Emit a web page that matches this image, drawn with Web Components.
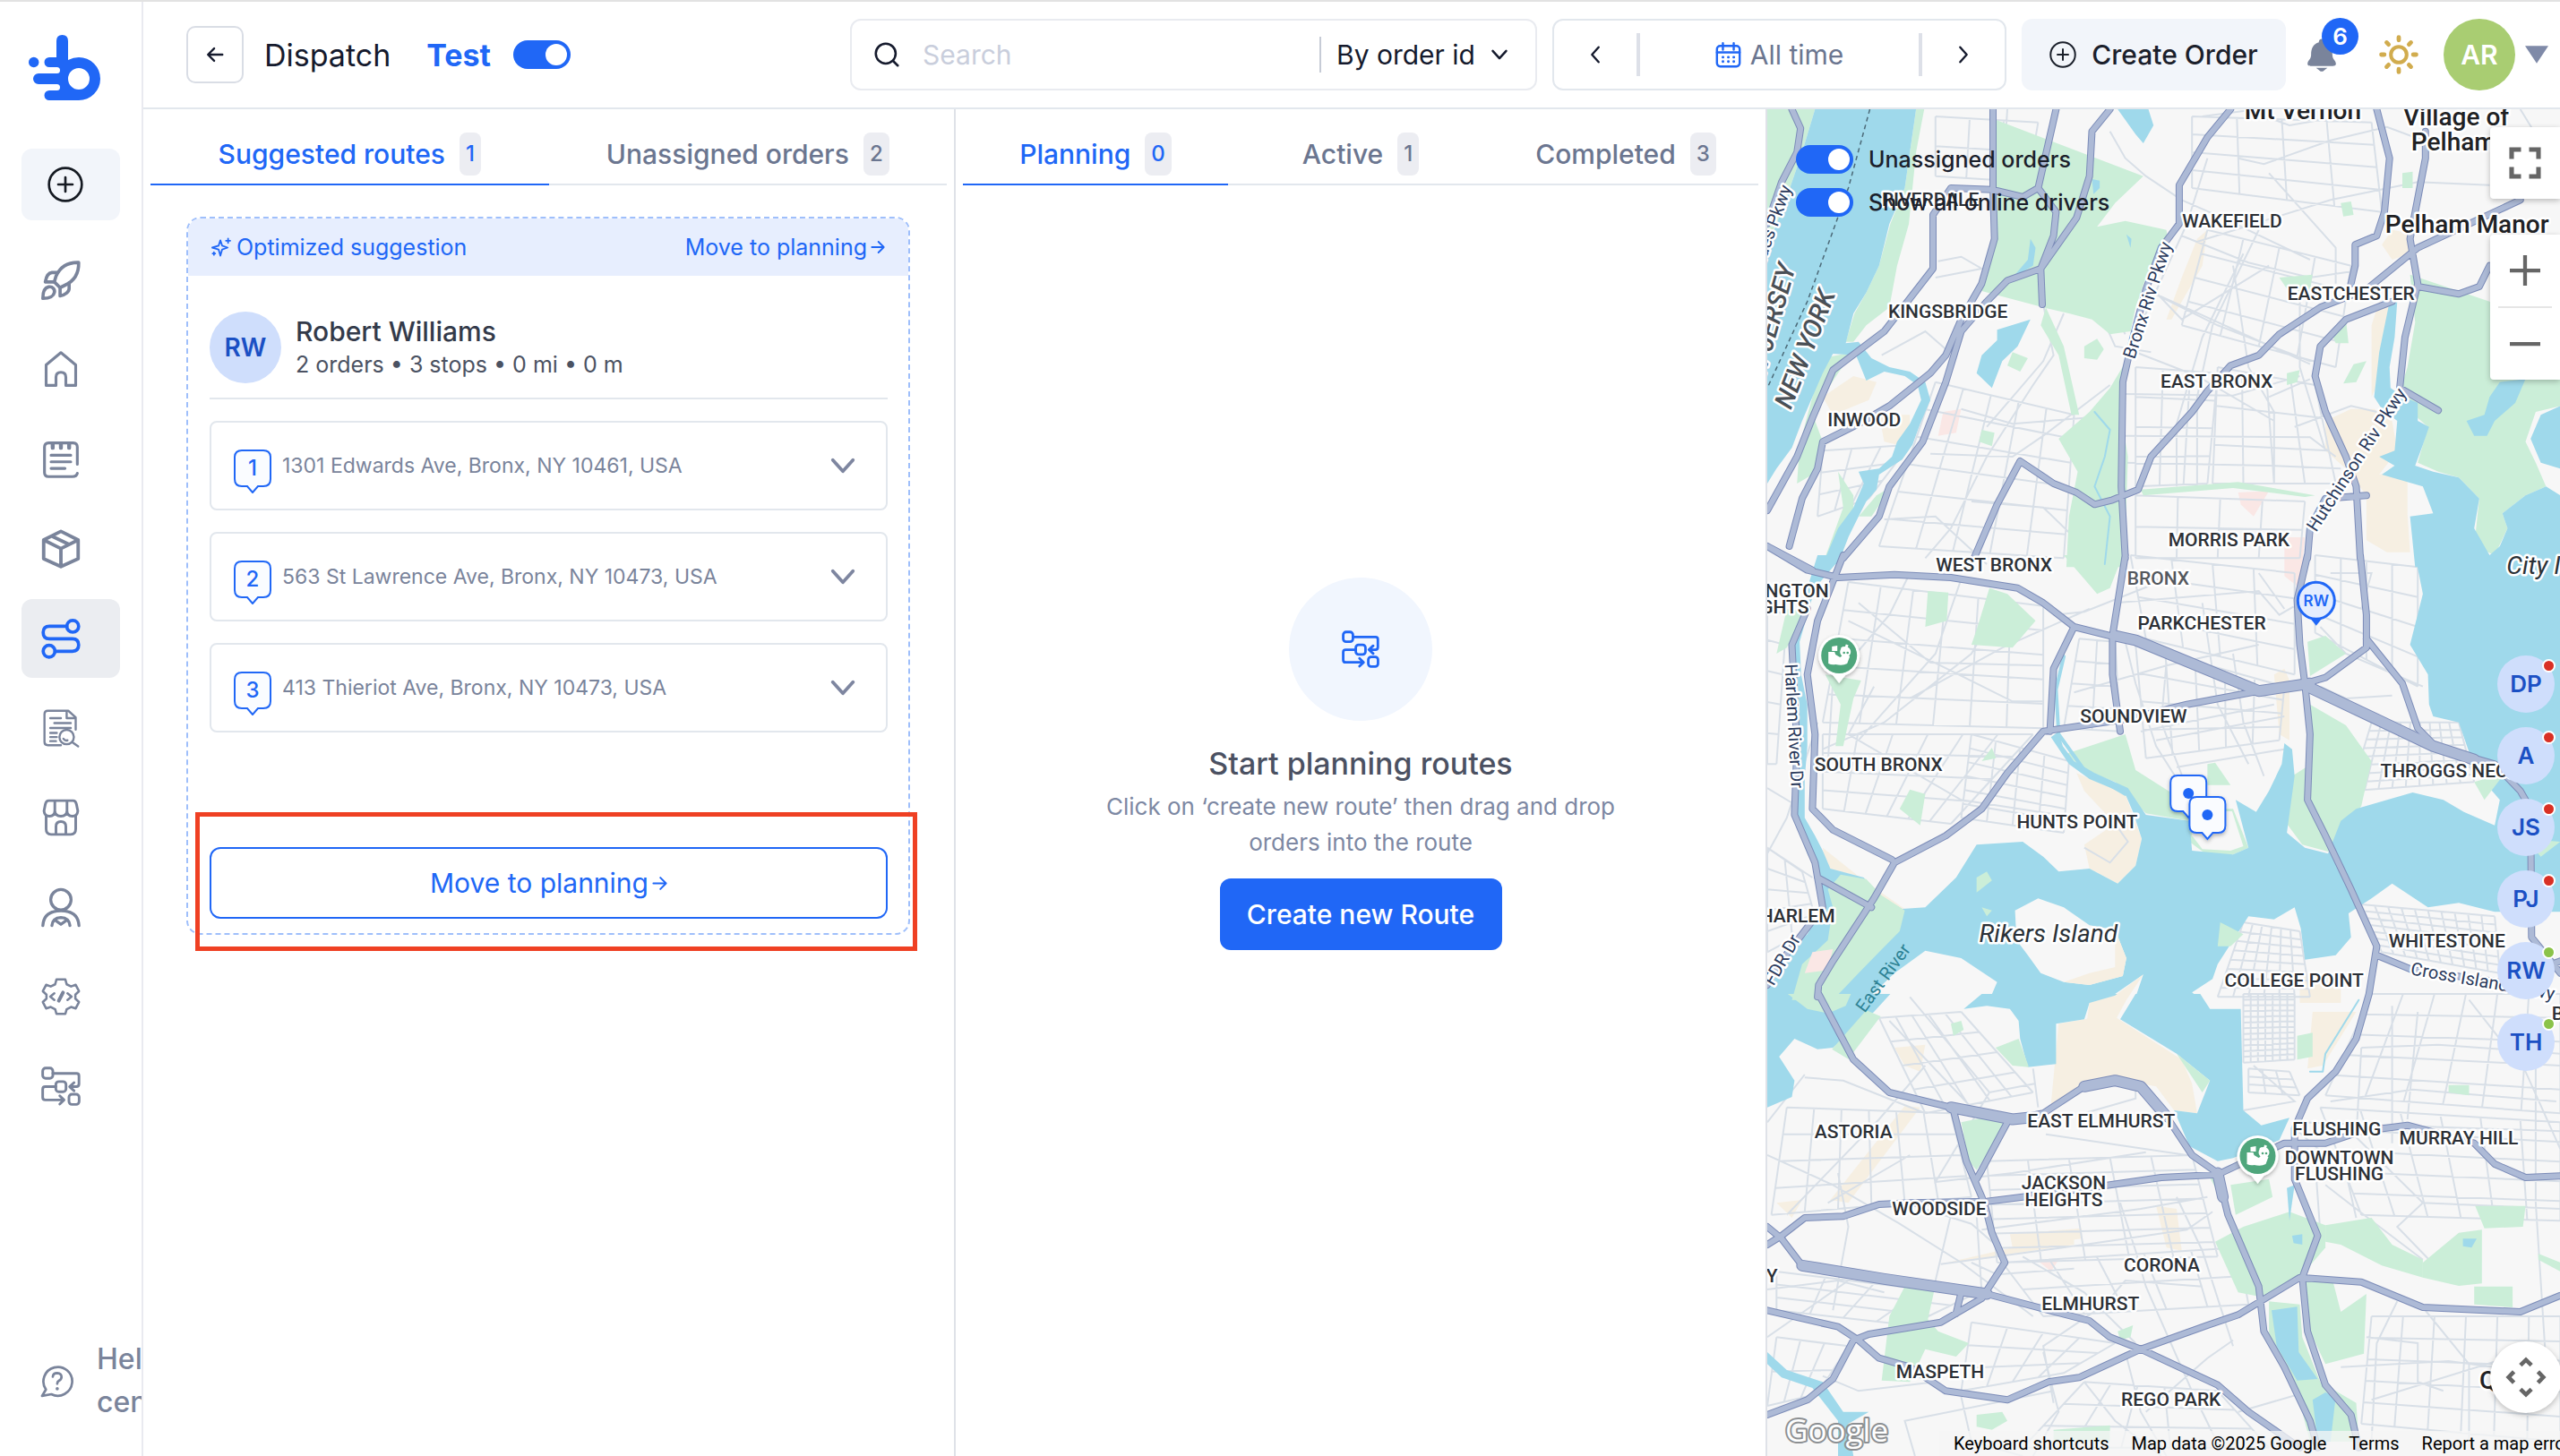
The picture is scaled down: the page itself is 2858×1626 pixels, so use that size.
<!DOCTYPE html>
<html lang="en">
<head>
<meta charset="utf-8">
<title>Dispatch</title>
<style>
html,body{margin:0;height:100%}
body{font-family:Inter,"Open Sans",sans-serif;color:#151a2d;background:#fff;overflow:hidden;
--blue:#2067f6;--line:#e2e7ed;--slate:#6b7690;--mute:#7a849b;--soft:#f2f5fa;--chip:#ecedf2}
</style>
</head>
<body>
<dispatch-app></dispatch-app>
<script>
const define=(name,css,html,init)=>{
  const t=document.createElement('template');
  t.innerHTML=`<style>*{box-sizing:border-box}button,input,select{font:inherit;color:inherit;margin:0}button{border:0;padding:0;background:none;cursor:pointer}h1,h2,p,ul,ol{margin:0;padding:0;font:inherit;list-style:none}a{color:inherit;text-decoration:none}${css}</style>${html}`;
  customElements.define(name,class extends HTMLElement{
    connectedCallback(){
      if(this.shadowRoot)return;
      const r=this.attachShadow({mode:'open'});
      r.append(t.content.cloneNode(true));
      if(init)init(this,r);
    }
  });
};

/* ---------- icons ---------- */
const planner='<rect x=".9" y="1" width="6.2" height="6.2" rx="1.8"/><path d="M7.1 4.2H21.5Q23 4.2 23 5.7V10.7Q23 12.3 21.4 12.3H17.6M20 9.8L17.3 12.3L20 14.8"/><rect x="8.9" y="9.2" width="6.2" height="6.2" rx="1.8"/><path d="M8.9 12.3H2.5Q.9 12.3 .9 13.9V18.8Q.9 20.4 2.5 20.4H13.8M11.3 17.9L13.9 20.4L11.3 22.9"/><rect x="16.9" y="16.9" width="6.2" height="6.2" rx="1.8"/>';
const ICONS={
 back:['24','<path d="M21 12H4M11 4.500L3.500 12L11 19.500"/>',2.6],
 arrow:['24','<path d="M2 12H22M13 3L22 12L13 21"/>',2.8],
 plus:['24','<circle cx="12" cy="12" r="11"/><path d="M12 7.200V16.800M7.200 12H16.800"/>',1.6],
 rocket:['24','<path d="M22.800 1.200C16 1 11.500 4 9 9.500L8 13L11.500 16.500L14.500 15C20.500 12.200 23 8 22.800 1.200Z"/><path d="M10 7.300H6.500C4.500 7.500 3 10 2.500 13H8M11.500 16.500V21.500C14.500 21 17 19 17 17V13.600"/><path d="M1 23C1 19 2 16.500 4.500 16C7 15.600 8.500 17.500 8 19.500C7.500 22 5 23 1 23Z"/>',2],
 home:['24','<path d="M3 21.500V9L12 1.500L21 9V21.500H15V16.500Q15 13.500 12 13.500Q9 13.500 9 16.500V21.500Z"/>',1.7],
 notes:['24','<path d="M22 15V4.500Q22 2 19.500 2H4.500Q2 2 2 4.500V20Q2 22.500 4.500 22.500H19Q21.500 22.500 22 20.500"/><path d="M7 2.500V5M12 2.500V5M17 2.500V5" stroke-width="2.400"/><path d="M6 9.500H18M6 13.500H18M6 17.500H14.500"/>',1.7],
 box:['24','<path d="M12 1.300L22.500 6.500V18L12 22.800L1.500 18V6.500ZM1.500 6.500L12 11.800L22.500 6.500M12 11.800V22.800M6.500 4.200L17 9.300"/>',2.1],
 route:['24','<circle cx="19.200" cy="4.600" r="3.600"/><circle cx="4.800" cy="19.800" r="3.600"/><path d="M15.600 4.600H5Q1.200 4.600 1.200 8.300Q1.200 12.200 5 12.200H19Q22.800 12.200 22.800 16Q22.800 19.800 19 19.800H8.400"/>',2],
 docsearch:['24','<path d="M21 13V5.500L16.500 1.500H4Q2 1.500 2 3.500V20.500Q2 22.500 4 22.500H12M15.500 1.500V6H21M5.500 6H12M8 9H18M5.500 12H18M5.500 15H9.500M5.500 17.500H9.500M5.500 20H9"/><circle cx="15.500" cy="17.500" r="4.400"/><path d="M13.500 18.500Q14.500 20 16 19.500M18.800 20.600L22.500 23.200"/>',1.3],
 store:['24','<path d="M3 11V19Q3 22.300 6 22.300H18Q21 22.300 21 19V11"/><path d="M4.500 1.700H19.500Q21 1.700 21.500 4L22.300 8Q22 11.200 19 11.200Q15.800 11.200 15.700 8V1.700M8.300 1.700V8Q8.200 11.200 5 11.200Q2 11.200 1.700 8L2.500 4Q3 1.700 4.500 1.700M8.300 8Q8.500 11.200 12 11.200Q15.500 11.200 15.700 8M9 22V17.500Q9 14.500 12 14.500Q15 14.500 15 17.500V22"/>',1.6],
 person:['24','<circle cx="12" cy="7.500" r="6.200"/><path d="M1 23.300Q1.500 14.300 12 14.200Q22.500 14.300 23 23.300M6.500 23.300Q7 18.500 12 18.300Q17 18.500 17.500 23.300M8.500 20L12 22.500L15.500 20"/>',1.8],
 gear:['24','<path d="M9.300 1.500H14.700L15.500 4.500L18.200 5.800L21 4.800L23 8.700L20.800 10.800V13.200L23 15.300L21 19.200L18.200 18.300L15.500 19.700L14.700 22.500H9.300L8.500 19.700L5.800 18.300L3 19.200L1 15.300L3.200 13.200V10.800L1 8.700L3 4.800L5.800 5.800L8.500 4.500Z"/><path d="M8 10L5.500 12L8 14M16 10L18.500 12L16 14"/><path d="M13.300 9.500L10.700 14.500" stroke-width="2.200"/>',1.4],
 planner:['24',planner,1.6],
 help:['24','<path d="M4.200 18.500A10.700 10.700 0 1 1 8.200 22L1.300 23.300Z"/><path d="M9.300 9Q9.500 6.300 12.600 6.300Q15.800 6.500 15.800 9.300Q15.700 11 13.800 12Q12.600 12.700 12.600 14.200"/><path d="M12.600 17.800V18" stroke-width="2.400"/>',1.8],
 search:['24','<circle cx="11" cy="11" r="9.500"/><path d="M18 18L22.500 22.500"/>',2.2],
 down:['24','<path d="M3 7L12 17L21 7"/>',3],
 left:['24','<path d="M16 3L8 12L16 21"/>',2.600],
 right:['24','<path d="M8 3L16 12L8 21"/>',2.600],
 cal:['24','<rect x="1.500" y="3.500" width="21" height="19" rx="3"/><path d="M7 1V7M17 1V7M1.500 9.500H22.500"/><path d="M7 14H7.100M12 14H12.100M17 14H17.100M7 18H7.100M12 18H12.100M17 18H17.100" stroke-width="2.400"/>',2],
 bell:['24','<path fill="currentColor" stroke="none" d="M12 1C14 1 14 3 14 3.300C18 4.500 19.500 7.500 19.500 12C19.500 15.500 22 16 22 18.500C22 20 20.500 20 20 20H4C3.500 20 2 20 2 18.500C2 16 4.500 15.500 4.500 12C4.500 7.500 6 4.500 10 3.300C10 3 10 1 12 1ZM8 21.300H16L12.800 23.800H11.200Z"/>',1],
 sun:['24','<circle cx="12" cy="12" r="4.800"/><path stroke-width="2.600" d="M12 1.400V3.200M12 20.800V22.600M1.400 12H3.200M20.800 12H22.600M4.600 4.600L5.800 5.800M18.200 18.200L19.400 19.400M4.600 19.400L5.800 18.200M18.200 5.800L19.400 4.600"/>',2.2],
 tri:['24','<path fill="currentColor" stroke="none" d="M0 3H24L12 21Z"/>',0],
 spark:['24','<path d="M11.500 3.500L13.600 9.900L20 12L13.600 14.100L11.500 21.500L9.400 14.100L2 12L9.400 9.900Z"/><path d="M20.500 1.500V6.500M18 4H23M4 17.500V20.500M2.500 19H5.500"/>',1.9],
 full:['24','<path stroke-linecap="butt" stroke-linejoin="miter" d="M2 9V2H9M15 2H22V9M22 15V22H15M9 22H2V15"/>',3.4],
 zin:['24','<path stroke-linecap="butt" d="M12 0V24M0 12H24"/>',3],
 zout:['24','<path stroke-linecap="butt" d="M0 12H24"/>',3],
 cam:['24','<path stroke-linecap="butt" stroke-linejoin="miter" d="M8.800 5L12 1.900L15.200 5M8.800 19L12 22.100L15.200 19M5 8.800L1.900 12L5 15.200M19 8.800L22.100 12L19 15.200"/>',2.4],
 logo:['80 74','<g fill="currentColor" stroke="none"><path fill-rule="evenodd" d="M37.500 0Q44 0 44 7V28Q50 25 56 25A24 24 0 0 1 56 73H23A5.500 5.500 0 0 1 23 62H31.500A3.500 3.500 0 0 0 31.500 55H11A6 6 0 0 1 11 43H31.500A3.500 3.500 0 0 0 31.500 36H23A5.500 5.500 0 0 1 23 25H31V7Q31 0 37.500 0ZM56 37A12 12 0 1 0 56 61A12 12 0 1 0 56 37Z"/><circle cx="5.700" cy="30.500" r="5.700"/></g>',0]
};
define('ui-icon',`:host{display:inline-flex;flex:none;width:var(--s,44px);height:var(--s,44px)}svg{width:100%;height:100%;display:block;overflow:visible}`,'',(el,r)=>{
  const [vb,body,w]=ICONS[el.getAttribute('name')];
  const box=vb.includes(' ')?vb:vb+' '+vb;
  r.innerHTML+=`<svg viewBox="0 0 ${box}" aria-hidden="true" fill="none" stroke="currentColor" stroke-width="${w}" stroke-linecap="round" stroke-linejoin="round">${body}</svg>`;
});

/* ---------- switch ---------- */
define('ui-switch',`:host{display:flex}label{display:flex;align-items:center;gap:17px;cursor:pointer}
:host([before]) label{flex-direction:row-reverse;gap:25px}
input{appearance:none;width:64px;height:32px;border-radius:16px;background:var(--blue);position:relative;flex:none}
input::after{content:"";position:absolute;right:4px;top:4px;width:24px;height:24px;border-radius:50%;background:#fff}`,
`<label><input type="checkbox" role="switch" checked><span><slot></slot></span></label>`);

/* ---------- sidebar ---------- */
define('app-sidebar',`:host{display:flex;flex-direction:column;width:160px;flex:none;border-right:2px solid #e9eaf0;color:var(--mute);overflow:hidden;padding:37px 0 36px}
.logo{--s:80px;color:var(--blue);margin-left:32px;height:74px;display:flex;align-items:center}
.add{display:flex;align-items:center;width:110px;height:80px;margin:53px 0 23px 24px;padding-left:29px;border-radius:12px;background:var(--soft);color:#151a22;--s:40px}
ul{display:flex;flex-direction:column;gap:12px;margin-left:24px}
li a{display:flex;align-items:center;width:110px;height:88px;border-radius:12px;padding-left:22px}
.on{background:#ebedf1;color:var(--blue)}
.help{display:flex;align-items:center;margin-top:auto;padding-left:45px;width:240px;gap:27px;--s:36px;font-size:32px;line-height:48px;font-weight:500}
.help span{width:120px}`,
`<a class="logo" href="#" aria-label="Home"><ui-icon name="logo"></ui-icon></a>
<button class="add" aria-label="Add"><ui-icon name="plus"></ui-icon></button>
<nav><ul>${['rocket','home','notes','box','route','docsearch','store','person','gear','planner'].map(n=>`<li><a href="#" aria-label="${n}"${n=='route'?' class="on"':''}><ui-icon name="${n}"></ui-icon></a></li>`).join('')}</ul></nav>
<a class="help" href="#"><ui-icon name="help"></ui-icon><span>Help center</span></a>`);

/* ---------- header ---------- */
define('app-header',`:host{display:flex;align-items:center;height:120px;flex:none;border-bottom:2px solid var(--line);padding:0 13px 0 48px;gap:17px;font-size:30px}
.back{width:64px;height:64px;border:2px solid #d9dde5;border-radius:10px;display:flex;align-items:center;justify-content:center;--s:22px}
h1{font-size:34px;margin:0 23px 0 6px}
.test{color:var(--blue);font-size:34px;font-weight:700;margin-right:auto}
.box{display:flex;align-items:center;height:80px;border:2px solid var(--line);border-radius:12px}
.search{flex:0 1 767px;min-width:0;border-color:#e9ebf0;padding:0 30px 0 25px;--s:28px}
.search input{flex:1 1 0;width:0;min-width:0;border:0;outline:0;background:none;padding:0 0 0 26px}
input::placeholder{color:#c9cedc;opacity:1}
.pick{display:flex;align-items:center;border-left:2px solid #c6cbd6;height:40px;padding-left:17px;--s:20px}
select{appearance:none;border:0;background:none;width:172px;padding:0;outline:0}
.date{width:507px;justify-content:space-between;--s:22px}
.date>button{width:96px;height:48px;display:flex;align-items:center;justify-content:center}
.date>button:first-child{border-right:4px solid #dde0e8}
.date>button:last-child{border-left:4px solid #dde0e8}
.date>.all{width:auto;gap:10px;color:var(--slate)}
.all ui-icon{--s:29px;color:var(--blue)}
.create{height:80px;border-radius:12px;background:var(--soft);display:flex;align-items:center;justify-content:center;gap:17px;width:295px;font-weight:500;color:#1b202b;--s:30px}
.bell{position:relative;display:flex;color:var(--mute);--s:38px;margin-left:4px}
.bell b{position:absolute;left:19px;top:-22px;width:41px;height:41px;border-radius:50%;background:var(--blue);color:#fff;font-size:26px;line-height:41px;font-weight:600}
.sun{display:flex;color:#d1ac4e;margin-left:28px}
.user{display:flex;align-items:center;gap:11px;--s:26px;color:#7f8aa8;margin-left:11px}
.user span{width:80px;height:80px;border-radius:50%;background:#a9cd72;color:#fff;font-weight:600;line-height:80px}`,
`<button class="back" aria-label="Back"><ui-icon name="back"></ui-icon></button>
<h1>Dispatch</h1>
<ui-switch class="test" before>Test</ui-switch>
<div class="box search"><ui-icon name="search"></ui-icon><input type="search" aria-label="Search" placeholder="Search"><div class="pick"><select aria-label="Search field"><option>By order id</option></select><ui-icon name="down"></ui-icon></div></div>
<div class="box date"><button aria-label="Previous"><ui-icon name="left"></ui-icon></button><button class="all"><ui-icon name="cal"></ui-icon>All time</button><button aria-label="Next"><ui-icon name="right"></ui-icon></button></div>
<button class="create"><ui-icon name="plus"></ui-icon>Create Order</button>
<button class="bell" aria-label="Notifications"><ui-icon name="bell"></ui-icon><b>6</b></button>
<button class="sun" aria-label="Theme"><ui-icon name="sun"></ui-icon></button>
<button class="user"><span>AR</span><ui-icon name="tri"></ui-icon></button>`);

/* ---------- tabs ---------- */
define('ui-tabs',`:host{display:flex;margin:0 8px;height:85px;flex:none}`,'',(el,r)=>{
  el.setAttribute('role','tablist');
  r.innerHTML+=[...el.getAttribute('items').split(',')].map((s,i)=>{const [t,n]=s.split(':');return `<ui-tab ${i?'':'on'} count="${n}">${t}</ui-tab>`}).join('');
});
define('ui-tab',`:host{flex:1;display:flex}button{flex:1;display:flex;align-items:center;justify-content:center;gap:16px;padding-top:18px;padding-bottom:1px;border-bottom:2px solid var(--line);font-size:30px;font-weight:500;color:var(--slate);white-space:nowrap}
:host([on]) button{color:var(--blue);border-color:var(--blue)}
b{height:48px;line-height:48px;padding:0 7px;border-radius:8px;background:var(--chip);font-size:24px;font-weight:500}`,
`<button role="tab"><span><slot></slot></span><b></b></button>`,(el,r)=>r.querySelector('b').textContent=el.getAttribute('count'));

/* ---------- stop row ---------- */
define('stop-card',`:host{display:flex;align-items:center;height:100px;border:2px solid var(--line);border-radius:8px;padding:0 33px 0 25px;color:var(--mute);font-size:24px}
.n{position:relative;width:42px;height:49px;color:var(--blue);text-align:center;line-height:42px;margin-top:12px}
.n svg{position:absolute;left:0;top:0;width:42px;height:49px}
.n b{position:relative;font-weight:500}
p{flex:1;margin-left:12px;font-size:23px}
button{--s:30px;display:flex;color:#7e86a0}`,
`<div class="n"><svg viewBox="0 0 42 49" aria-hidden="true"><path d="M9 1H33Q41 1 41 9V33Q41 41 33 41H27L21 48L15 41H9Q1 41 1 33V9Q1 1 9 1Z" fill="#fafcff" stroke="#2067f6" stroke-width="2"/></svg><b></b></div>
<p><slot></slot></p><button aria-label="Expand"><ui-icon name="down"></ui-icon></button>`,(el,r)=>r.querySelector('b').textContent=el.getAttribute('n'));

/* ---------- suggestion card ---------- */
define('route-suggestion',`:host{display:block;margin:35px 49px 0 48px;border:2px dashed #9fbffb;border-radius:16px;position:relative}
header{display:flex;align-items:center;justify-content:space-between;height:64px;padding:0 26px 0 25px;background:#e7eefe;border-radius:14px 14px 0 0;color:var(--blue);font-size:25px;--s:23px}
header span{display:flex;align-items:center;gap:6px}
header button,.move{display:flex;align-items:center;gap:4px}
header button{--s:16px}
.body{padding:40px 23px 16px 24px}
.who{display:flex;align-items:center;gap:16px;padding-bottom:16px;border-bottom:2px solid var(--line)}
.av{width:80px;height:80px;border-radius:50%;background:#cfdefc;color:#1b50c4;font-weight:600;font-size:28px;line-height:80px;text-align:center}
h2{font-size:30px;line-height:38px;font-weight:500;color:#333a4a}
.who p{font-size:25px;line-height:36px;color:#4b5262}
ol{display:flex;flex-direction:column;gap:24px;margin:24px 0 128px}
.move{width:100%;height:80px;border:2px solid var(--blue);border-radius:12px;justify-content:center;color:var(--blue);font-size:30px;--s:17px}
.mark{position:absolute;left:8px;right:-10px;bottom:-20px;height:155px;border:5px solid #ef4023;pointer-events:none}`,
`<header><span><ui-icon name="spark"></ui-icon>Optimized suggestion</span><button>Move to planning<ui-icon name="arrow"></ui-icon></button></header>
<div class="body"><div class="who"><div class="av">RW</div><div><h2>Robert Williams</h2><p>2 orders • 3 stops • 0 mi • 0 m</p></div></div>
<ol><li><stop-card n="1">1301 Edwards Ave, Bronx, NY 10461, USA</stop-card></li><li><stop-card n="2">563 St Lawrence Ave, Bronx, NY 10473, USA</stop-card></li><li><stop-card n="3">413 Thieriot Ave, Bronx, NY 10473, USA</stop-card></li></ol>
<button class="move">Move to planning<ui-icon name="arrow"></ui-icon></button></div>
<div class="mark"></div>`);

/* ---------- empty planning ---------- */
define('planning-empty',`:host{flex:1;display:flex;flex-direction:column;align-items:center;justify-content:center;padding-bottom:127px;text-align:center}
.dot{width:160px;height:160px;border-radius:50%;background:#f1f6fe;display:flex;align-items:center;justify-content:center;color:var(--blue);--s:42px}
h2{font-size:34px;line-height:48px;font-weight:500;color:#4b5162;margin:24px 0 4px}
p{width:600px;font-size:26px;line-height:40px;color:#7d88a3}
button{margin-top:20px;width:315px;height:80px;border-radius:12px;background:var(--blue);color:#fff;font-size:30px;font-weight:500}`,
`<div class="dot"><ui-icon name="planner"></ui-icon></div><h2>Start planning routes</h2><p>Click on ‘create new route’ then drag and drop orders into the route</p><button>Create new Route</button>`);

/* ---------- map ---------- */
/* Geometry is surveyed on three stacked sheets; each starts at its own y offset. */
const SHEET={A:0,B:1530,C:3000};
const K=[898/1568,1/3];
const pt=(s,x,y)=>[(x-22)*K[0],(y+SHEET[s]-36)*K[1]];
const f=v=>v.toFixed(1);
const path=(s,str,close)=>'M'+str.trim().split(/\s+/).map(p=>{const[x,y]=p.split(',').map(Number);return pt(s,x,y).map(f).join(' ')}).join('L')+(close?'Z':'');
const polys=(list,fill)=>`<g fill="${fill}">${list.map(([s,d])=>`<path d="${path(s,d,1)}"/>`).join('')}</g>`;
const grid=(s,q,n,m)=>{
  const P=q.split(' ').map(p=>p.split(',').map(Number));
  const mix=(a,b,t)=>[a[0]+(b[0]-a[0])*t,a[1]+(b[1]-a[1])*t];
  let d='';
  const ln=(a,b)=>d+='M'+pt(s,...a).map(f).join(' ')+'L'+pt(s,...b).map(f).join(' ');
  for(let i=0;i<=n;i++)ln(mix(P[0],P[1],i/n),mix(P[3],P[2],i/n));
  for(let i=0;i<=m;i++)ln(mix(P[0],P[3],i/m),mix(P[1],P[2],i/m));
  return d;
};
const water=[
['A','115,36 312,36 300,180 290,300 260,420 240,560 215,650 190,720 175,820 200,815 225,870 260,900 300,915 330,950 340,1010 320,1090 305,1160 285,1210 240,1260 235,1310 215,1350 200,1400 180,1470 160,1560 130,1560 160,1440 190,1370 210,1290 200,1250 240,1240 265,1200 275,1150 300,1090 322,1010 315,960 290,930 250,915 215,945 195,860 150,855 130,920 110,1000 90,1080 70,1170 40,1240 22,1290 22,500 60,330 90,180'],
['A','470,775 535,740 510,830 480,880 460,970 430,920 440,860 470,810'],
['A','705,36 765,36 775,90 755,150 740,120'],
['A','1235,680 1250,680 1245,800 1235,900 1237,970 1262,1000 1290,1020 1290,1080 1312,1100 1300,1160 1285,1230 1320,1250 1370,1270 1410,1340 1400,1440 1430,1530 1450,1500 1465,1440 1455,1390 1500,1330 1540,1300 1568,1330 1568,1570 1285,1570 1275,1400 1320,1390 1300,1300 1220,1260 1245,1230 1215,1200 1245,1180 1250,1080 1220,1040 1205,1000 1215,850'],
['A','1568,1030 1530,1060 1510,1140 1530,1220 1568,1240'],
['B','170,0 120,0 100,110 80,200 68,300 70,400 85,500 80,640 75,880 100,1000 125,1080 135,1170 100,1270 60,1330 22,1450 22,1490 215,1490 270,1400 330,1325 400,1350 470,1430 455,1490 650,1490 700,1470 755,1405 738,1490 868,1490 850,1465 890,1420 900,1370 930,1290 960,1210 1010,1220 1050,1180 1062,1250 1070,1355 1130,1340 1160,1280 1155,1200 1200,1150 1240,1100 1310,1180 1370,1165 1440,1195 1568,1195 1568,0 1285,0 1300,130 1275,300 1310,400 1312,500 1320,540 1370,560 1390,660 1400,720 1450,820 1440,905 1380,860 1340,820 1280,795 1170,850 1140,890 1115,1000 1070,980 1035,930 1050,740 1045,650 1030,630 1025,700 1000,790 975,860 935,820 960,980 930,1003 850,990 845,890 760,870 725,780 660,730 620,690 598,640 590,590 575,610 610,700 650,750 720,800 735,860 752,950 740,1040 705,1100 650,1050 590,1060 560,1010 520,960 430,970 390,1080 330,1180 285,1185 240,1140 210,1080 145,1050 130,990 115,940 95,880 95,750 100,640 100,500 88,400 85,290 100,200 115,110'],
['C','22,0 22,380 70,345 75,290 45,210 75,150 120,185 150,180 230,60 262,0'],
['C','440,0 405,50 450,40 495,50 512,90 515,150 530,245 585,235 585,100 640,85 650,30 690,65 705,0'],
['C','740,0 710,85 820,200 885,290 860,400 815,390 845,510 900,560 930,550 1020,490 1040,415 985,440 950,390 945,50 885,50 866,0'],
['C','22,1200 60,1260 130,1300 170,1400 220,1400 180,1440 190,1548 160,1548 160,1430 110,1320 50,1285 22,1240']
];
const islands=[
['B','505,1190 550,1150 600,1180 650,1240 700,1255 722,1350 715,1410 650,1440 600,1430 555,1400 530,1340 508,1290']];
const parks=[
['A','22,36 115,36 90,180 60,330 40,420 22,480'],
['A','312,36 328,36 312,180 298,420 275,560 260,700 215,760 190,815 175,815 192,720 215,650 240,560 262,420 290,300'],
['A','465,70 755,260 700,350 665,430 720,410 800,440 805,500 760,600 740,700 730,780 690,790 655,740 610,720 560,700 440,645 465,480 460,300'],
['A','725,870 712,1060 725,1200 718,1570 605,1570 610,1400 627,1250 590,1140 650,1050 690,970'],
['A','565,700 600,830 630,1060 615,1060 590,860 555,760'],['A','640,830 665,805 678,840 665,875 640,870'],
['A','1275,590 1430,680 1568,940 1568,1030 1520,1050 1500,1150 1520,1220 1540,1300 1500,1330 1455,1390 1465,1440 1440,1530 1400,1500 1410,1340 1370,1270 1330,1250 1290,1220 1310,1100 1250,1010 1270,900 1285,750'],
['A','1020,600 1085,590 1080,640 1040,650'],['A','1140,350 1160,345 1165,390 1145,395'],['A','1260,250 1280,245 1280,300 1260,300'],['A','1035,920 1060,910 1055,950 1035,960'],['A','1165,890 1190,880 1170,950 1145,955'],['A','1120,780 1150,740 1155,820 1130,820'],
['A','130,870 190,850 160,920 130,1000 115,1080 130,1150 110,1260 80,1290 85,1160 110,1000'],['A','500,850 530,870 515,915 490,895'],['A','440,1110 465,1120 460,1165 435,1150'],
['A','750,1310 940,1285 1090,1330 1070,1335 930,1305 755,1330'],
['A','160,1250 190,1330 190,1400 150,1560 130,1560 170,1370'],['A','235,1330 265,1300 225,1400 200,1400'],
['B','640,0 715,0 690,110 665,130 650,100 600,0'],['B','455,110 490,130 545,220 500,310 420,300 430,250'],['B','335,120 375,125 372,220 330,240'],
['B','1075,290 1110,270 1150,330 1080,405'],
['B','1080,500 1150,570 1200,690 1180,840 1120,995 1065,970 1035,900 1045,740 1082,700'],
['B','605,665 720,600 740,720 850,840 845,890 760,865 700,760 640,720'],['B','280,850 300,785 330,800 320,905'],['B','440,690 460,645 468,680'],
['B','850,850 930,850 960,980 930,1003 880,1005 845,960'],['B','880,700 895,695 925,770 880,770'],
['B','430,1080 450,1060 460,1090 430,1130'],['B','440,1180 460,1190 450,1210'],
['B','165,1070 215,1085 245,1140 290,1190 280,1260 240,1330 200,1400 150,1490 70,1490 90,1370 140,1290 150,1180 140,1120'],
['B','905,1230 950,1270 925,1310 900,1310'],['B','135,400 205,420 190,480 170,640 155,640 165,500'],['B','1400,760 1460,730 1420,820'],['B','1500,950 1568,960 1530,1010'],
['B','60,180 95,190 60,310 40,330'],
['C','62,0 185,0 175,40 140,65 100,50'],
['C','215,55 243,75 180,218 148,185'],['C','400,430 470,405 490,430 430,590 415,560'],['C','467,180 512,150 532,245 500,240'],
['C','820,200 885,290 870,330'],['C','925,640 1000,620 1007,680 935,740'],['C','880,600 905,630 905,680'],
['C','950,780 1040,730 1110,775 1110,850 1060,950 1000,1020 940,1000 895,830'],
['C','1110,775 1180,755 1200,750 1240,840 1300,890 1300,950 1220,910 1140,840 1110,830'],
['C','1370,800 1415,790 1415,970 1370,978 1300,950 1300,900'],['C','1402,710 1500,710 1495,780 1420,785'],['C','1400,980 1475,980 1475,1050 1400,1040'],
['C','1070,950 1125,965 1140,1065 1190,1005 1185,1205 1110,1240 1080,1130'],['C','1000,1030 1060,1040 1065,1150 1100,1300 1170,1370 1175,1500 1080,1500 1050,1300 1000,1150'],
['C','290,980 348,990 335,1090 355,1130 415,1170 390,1215 330,1190 300,1300 245,1295 260,1080'],
['C','1055,140 1085,130 1085,210 1055,220'],['C','1350,305 1390,305 1390,340 1350,330'],['C','380,100 400,90 405,120 385,140'],['C','430,1410 480,1400 490,1430 460,1460 430,1450'],['C','580,1460 690,1445 690,1500 580,1500'],['C','1525,870 1568,900 1568,930 1525,890'],['C','705,1130 735,1110 730,1150 710,1160']
];
const lakes=[['A','1430,1000 1450,950 1500,940 1480,1020 1440,1080 1425,1130 1400,1130 1385,1080 1420,1060'],['C','1005,1060 1055,1048 1058,1200 1095,1290 1055,1295 1015,1180'],['C','1085,1360 1110,1335 1130,1350 1120,1500 1095,1500'],['C','1045,810 1065,805 1065,840 1048,835'],['C','1378,820 1405,820 1395,850 1378,845'],['C','1035,650 1050,640 1040,760'],['A','655,270 670,275 670,300 658,320'],['A','722,455 732,470 730,500'],['A','535,470 545,500 540,560 500,600 530,540']];
const sand=[
['A','130,1000 190,930 235,950 220,1010 150,1060'],['A','1215,680 1235,680 1215,950 1200,1000 1200,760'],['A','1110,1080 1160,1040 1205,1040 1240,1080 1250,1180 1215,1260 1270,1240 1270,1390 1275,1520 1230,1520 1190,1480 1190,1330 1150,1240 1110,1180'],['A','1240,440 1270,450 1275,520 1240,540 1220,490'],
['A','240,1060 300,1060 300,1170 250,1150'],['A','860,470 880,440 870,560 810,740 800,740 830,600'],
['B','625,730 720,800 752,950 740,1040 705,1100 650,1050 640,970 700,900 640,790'],['B','130,980 210,1090 290,1185 265,1180 190,1070 135,1050'],
['B','1010,400 1030,380 1040,420 1040,620 1020,600'],['B','1060,1400 1140,1410 1140,1500 1060,1500'],
['C','590,100 640,85 690,65 710,88 830,220 850,300 860,400 815,390 780,310 700,285 650,300 590,380 575,370'],
['C','1085,60 1170,60 1105,240 1075,250'],['C','495,805 635,785 635,820 500,850'],['C','645,30 720,0 690,65'],
['C','270,180 330,170 320,260 290,240'],['C','290,375 320,380 180,700 145,690'],['C','40,700 90,690 70,750'],['C','500,850 620,820 620,840 360,905'],['C','780,710 820,720 830,860 800,850']
];
const pink=[['A','365,1050 400,1040 390,1120 355,1130'],['A','940,1320 1000,1315 970,1400 945,1360'],['A','1030,1470 1070,1470 1060,1640 1030,1600'],['C','550,895 590,890 575,930'],['C','1185,840 1200,850 1195,880']];
const highways=[
['A','70,36 87,100 80,180 50,280 22,420'],
['A','462,36 462,300 465,470 440,620 400,740 370,860 340,920 260,1030 200,1090 130,1150 120,1240 90,1340 65,1500'],
['A','460,305 380,300 345,390 345,570 300,670 250,780 150,910 110,1070 80,1200 22,1380'],
['A','460,305 520,330 550,300'],
['A','585,36 570,150 550,300 585,380 580,460 555,570 490,610 450,680 400,780 370,950 325,1150 260,1300 240,1400 170,1540'],
['A','690,36 655,110 650,260 625,400 555,570 558,690'],
['A','925,36 880,130 825,290 825,420 790,500 760,640 735,800 715,950 712,1300 720,1540'],
['A','1210,36 1235,200 1225,380 1210,460 1168,490 1168,560 1160,620'],
['A','1305,110 1305,200 1275,470 1290,620 1265,800 1255,970 1330,1045'],
['A','1490,340 1290,500 1190,640 1100,700 1020,790 980,860 925,895 880,980 850,1050 770,1200 745,1310 695,1345 660,1360 625,1320 580,1290 515,1215 470,1360 425,1540'],
['A','1240,680 1150,740 1100,830 1090,930 1110,1050 1150,1200 1170,1300 1178,1540'],
['A','1290,630 1370,655 1410,630 1430,560'],['A','1075,1540 1080,1440 1110,1340 1190,1330'],['A','22,1500 110,1580'],
['B','22,-30 100,50 160,75 270,65 380,75 510,110 560,160 620,240 690,270 740,285 980,455 1070,430 1110,410 1190,310 1190,200 1178,0'],
['B','1075,0 1055,150 1060,300 1070,430 1080,600 1075,820 1110,940 1160,1120 1210,1310 1195,1470'],
['B','1070,430 980,455 840,500 720,550 560,590 490,730 440,850 370,940 270,1030 230,1150 150,1360 122,1440 120,1480'],
['B','720,0 695,270 695,400 710,590'],
['B','1070,440 1210,550 1320,640 1440,700 1490,790 1510,850 1512,1280 1568,1400'],
['B','1190,280 1260,430 1290,580 1330,650'],
['B','170,0 120,220 100,400 115,600 110,850 150,920 265,1020'],
['B','620,240 580,380 573,590'],
['B','100,180 70,300 80,640 75,870 115,1030 130,1180 90,1270 40,1380 22,1440'],
['B','120,1080 225,1180'],['B','1210,1340 1280,1390 1450,1430 1520,1390 1568,1360'],
['C','122,0 190,220 260,330 380,380 500,420 560,400 640,310 700,290 750,310 800,410 850,540 900,600 920,740 980,980 990,1130 1030,1250 1080,1430 1095,1520'],
['C','1195,0 1170,150 1130,260 1075,350 1050,450 1050,620 1095,810 1065,950 1075,1130 1110,1310 1160,1410 1175,1520'],
['C','385,390 410,560 445,700 460,800 485,900 440,1020 360,1100 220,1140 190,1160 150,1290 100,1360 22,1410'],
['C','490,430 440,590 430,620'],
['C','22,840 50,810 95,750 170,745 240,705 300,700 450,695 520,680 690,640 790,615 900,605 1030,500 1110,500 1180,460 1270,440 1400,500 1440,570 1500,615 1568,610'],
['C','22,780 50,820 90,910 250,955 450,1005 650,1095 690,1150 750,1190 900,1310 960,1400 1060,1520'],
['C','22,1060 160,1115 200,1160 240,1220 300,1250 370,1330 490,1360 570,1300 630,1285 750,1190 880,1110 940,1075 1060,950 1180,965 1300,1050 1490,1065 1568,1010'],
['C','400,1000 390,1070']
];
const wide=[['B','700,270 740,285 980,455 1080,430'],['B','1075,440 1210,550 1320,640 1400,685'],['C','90,910 250,955 450,1005'],['C','380,380 500,420 530,415'],['C','640,310 700,290 750,310 800,410'],['C','900,600 910,680']];
const minor=[
['A','490,36 480,300 490,500'],['A','690,110 720,200 760,260 830,340 910,400 1080,540'],['A','720,790 700,730 760,640 900,760 1080,880'],['A','830,460 960,550 1080,600 1160,580'],['A','760,640 1080,890'],
['A','940,200 990,220 1120,140 1230,95 1300,140'],['A','860,480 1120,340 1290,280 1430,290'],['A','870,60 960,40 1040,90 1140,60'],['A','720,990 930,995 1060,930'],['A','720,1130 1080,1135 1130,1200'],['A','720,1220 1000,1230 1140,1240'],
['A','880,200 840,420 720,870'],['A','950,520 870,800 820,1090 820,1300'],['A','980,440 890,760 860,1000 860,1300'],['A','930,560 960,900 1010,1050 1010,1290'],['A','1060,610 1060,900 1110,1180'],['A','1000,250 1130,500 1130,620'],
['A','560,690 580,860 540,960 450,1200 380,1440 330,1540'],['A','600,720 560,880 500,1000 450,1100'],['A','400,1040 500,1090 640,1070'],['A','340,1190 500,1200 560,1130 690,960'],['A','250,1410 350,1400 450,1560'],['A','420,1350 560,1370 620,1470'],
['A','700,560 640,440 640,600 700,830 770,850'],['A','780,650 830,740 1000,560'],['A','1490,36 1520,120 1568,160'],['A','1440,900 1350,980 1310,1150 1420,1250 1530,1360'],['A','350,600 440,570 400,530 355,545'],['A','245,860 330,780 370,840'],['A','740,850 860,930 1010,1080'],
['A','1000,1000 1080,940'],['A','1050,1100 1160,1030 1210,1050'],
['B','180,220 360,370 500,490 560,490'],['B','200,160 340,360 560,370'],['B','400,80 350,330 200,620'],['B','300,60 260,200 150,420 140,700'],['B','230,440 180,600 400,820 590,870'],['B','130,650 250,560 420,330 460,210'],['B','720,290 740,430 780,640 850,830'],['B','830,60 640,190 580,200'],['B','870,160 900,500 960,700'],
['B','780,620 1030,540'],['B','750,590 1010,500'],['B','820,710 1030,650'],['B','700,160 980,120 1020,200 1060,160'],['B','620,460 800,370 980,300'],['B','800,360 790,560 840,780'],['B','930,330 950,560 990,740'],['B','980,60 1030,180'],['B','1120,60 1200,60 1180,180'],['B','1100,240 1150,330 1300,440'],['B','1100,440 1150,480 1240,470'],['B','120,560 60,880 22,1000'],['B','22,780 80,840'],['B','22,980 110,1080'],['B','640,980 690,1030 725,960 700,900'],['B','650,180 480,310 300,480'],
['C','22,540 150,640 280,770 400,900 540,1080'],['C','95,270 22,430'],['C','95,280 170,290 330,400'],['C','260,90 420,380'],['C','300,10 455,330 545,300'],['C','330,240 240,420 60,740'],['C','455,330 350,630 500,600 760,530'],['C','540,250 550,380'],['C','565,470 840,540'],['C','440,790 750,720 880,680'],['C','360,905 640,840 840,790 890,730'],
['C','380,740 350,960 300,1240'],['C','710,700 740,860 760,980 860,1370'],['C','520,880 640,1000 740,1170'],['C','430,740 440,1000'],['C','820,680 870,860 930,1180'],['C','580,1370 560,1180 680,1040 720,960 870,980'],['C','420,900 470,940 620,920'],
['C','22,990 160,960 250,1000'],['C','160,600 180,780 150,1060'],['C','22,1150 180,960'],['C','290,700 420,770 480,860'],['C','300,540 140,700'],
['C','1180,180 1170,480 1300,700 1568,720'],['C','1240,40 1240,500'],['C','1290,60 1270,420'],['C','1180,180 1330,170 1568,200'],['C','1120,360 1280,320 1560,360'],['C','1060,430 1568,460'],['C','1390,20 1500,260 1568,520'],['C','1300,700 1250,780 1340,940'],['C','1520,230 1520,700 1540,1240'],['C','1190,1150 1290,1170 1290,1300 1340,1330'],['C','1200,1360 1500,1200 1568,1230'],['C','1140,1250 1350,1230 1568,1280'],['C','1300,1050 1390,1240 1390,1500'],['C','1250,1030 1210,1170 1200,1500'],['C','720,1200 750,1400 800,1548'],['C','760,1400 880,1220 930,1160'],['C','580,1330 290,1430 310,1548'],['C','400,1350 420,1500 520,1548'],['C','940,1400 1060,1340'],['C','350,1300 200,1330 130,1280'],['C','1110,640 1200,760 1300,890'],['C','1050,450 1150,600 1170,750'],['C','1090,560 1100,800'],['C','950,390 1050,360 970,240'],['C','640,400 740,350 740,310'],['C','560,1200 590,1400 540,1548'],['C','640,1300 700,1430 790,1548']
].map(([s,d])=>path(s,d)).join('')+
 grid('A','880,440 1160,560 1130,900 830,760',4,4)+grid('A','740,900 900,920 880,1290 740,1300',3,4)+grid('A','900,900 1090,960 1130,1290 890,1290',4,3)+grid('A','350,60 550,80 530,280 350,260',3,2)+grid('A','850,60 1200,80 1220,380 850,300',4,4)+
 grid('A','350,950 620,1060 600,1540 240,1500',5,6)+grid('A','740,1330 1070,1350 1060,1540 740,1540',4,2)+grid('A','130,1180 300,1160 220,1340 120,1400',3,3)+
 grid('B','180,90 560,170 560,580 130,560',6,5)+grid('B','130,600 540,600 380,900 130,850',6,4)+grid('B','420,600 610,690 600,930 400,880',4,6)+grid('B','630,280 700,290 710,590 600,580',2,4)+grid('B','740,300 1030,440 1020,620 760,680',5,4)+grid('B','730,0 1050,60 1050,400 760,280',4,4)+grid('B','1200,560 1370,560 1400,760 1160,790',9,8)+grid('B','1090,0 1290,40 1290,440 1090,260',4,4)+
 grid('B','950,1230 1060,1260 1080,1480 900,1480',6,8)+grid('B','1180,1170 1440,1210 1450,1400 1220,1330',10,7)+grid('C','950,0 1050,0 1050,220 950,230',7,12)+grid('C','960,250 1040,260 1060,340 960,330',3,3)+grid('B','22,980 90,1060 120,1240 22,1330',2,5)+grid('B','22,180 60,200 40,700 22,700',1,5)+
 grid('C','240,80 400,60 540,330 330,400',5,4)+grid('C','60,380 380,400 420,680 30,740',6,4)+grid('C','450,560 850,540 900,880 470,900',5,7)+grid('C','480,900 940,850 960,1040 560,1080',5,2)+grid('C','40,930 420,1010 300,1110 40,1060',4,3)+grid('C','420,1100 700,1170 600,1270 400,1330',4,3)+grid('C','640,1300 900,1330 1000,1520 520,1520',5,3)+grid('C','1100,380 1568,430 1568,760 1180,740',6,5)+grid('C','1200,0 1568,0 1568,400 1110,340',6,5)+grid('C','1200,1080 1568,1080 1568,1500 1180,1440',6,5)+grid('C','40,1150 180,1180 120,1340 22,1380',3,2);

const L=[
['A',1066,66,'Mt Vernon','c'],['A',1365,88,'Village of','c'],['A',1360,172,'Pelham','c'],['A',1386,448,'Pelham Manor','c'],
['A',928,430,'WAKEFIELD'],['A',374,732,'KINGSBRIDGE'],['A',1160,672,'EASTCHESTER'],['A',898,967,'EAST BRONX'],['A',211,1096,'INWOOD'],['A',922,1496,'MORRIS PARK'],['A',340,357,'RIVERDALE'],
['B',464,52,'WEST BRONX'],['B',784,96,'BRONX','n g'],['B',142,138,'WASHINGTON','n e'],['B',103,192,'HEIGHTS','n e'],['B',869,247,'PARKCHESTER'],['B',736,558,'SOUNDVIEW'],['B',239,719,'SOUTH BRONX'],['B',626,912,'HUNTS POINT'],['B',1217,741,'THROGGS NECK','n s'],['B',154,1227,'EAST HARLEM','n e'],['B',1049,1443,'COLLEGE POINT'],['B',1347,1311,'WHITESTONE'],['B',1551,1553,'BAYSIDE','n s'],
['B',570,1294,'Rikers Island','c i'],['B',1463,60,'City Island','c i s'],
['C',190,480,'ASTORIA'],['C',673,444,'EAST ELMHURST'],['C',1132,471,'FLUSHING'],['C',1370,501,'MURRAY HILL'],['C',1137,567,'DOWNTOWN'],['C',1137,621,'FLUSHING'],['C',600,652,'JACKSON'],['C',600,708,'HEIGHTS'],['C',357,738,'WOODSIDE'],['C',791,928,'CORONA'],['C',652,1056,'ELMHURST'],['C',359,1285,'MASPETH'],['C',809,1377,'REGO PARK'],['C',42,962,'LONG ISLAND CITY','n e'],['C',1410,1320,'Queens','c s'],
['A',738,872,'Bronx Riv Pkwy','r s',-72],['A',1092,1452,'Hutchinson Riv Pkwy','r s',-57],['A',68,1042,'NEW YORK','st s',-69],['A',78,560,'NEW JERSEY','st e',-74],['A',70,296,'Palisades Pkwy','r e',-70],
['B',1275,1402,'Cross Island Pkwy','r s',10],['B',56,362,'Harlem River Dr','r s',87],['B',34,1442,'FDR Dr','r s',-60],['B',212,1532,'East River','w s',-54]
];
const labels=L.map(([s,x,y,t,c='n',a])=>{const[p,q]=pt(s,x,y+3);return `<text class="${c}" transform="translate(${f(p)} ${f(q)})${a?` rotate(${a})`:''}">${t}</text>`}).join('');
const poi=(x,y)=>{const[p,q]=pt('B',x,y);return `<g transform="translate(${f(p)} ${f(q)})"><path d="M0 31L-7 22A23 23 0 1 1 7 22Z" fill="#fff" filter="url(#sh)"/><circle r="20" fill="#4fa67c"/><path fill="#fff" d="M-12 -4L-12 9Q-8 11 -4 10Q4 12 9 9L12 1L6 -1L1 2L-4 -1L-5 -4ZM-8 -10L-2 -11L-2 -5L-8 -5Z"/><circle cx="7" cy="-4" r="6" fill="#fff"/><path d="M3 -7Q4 -9 6 -8L8 -9L9 -12" stroke="#fff" stroke-width="3" fill="none"/><circle cx="5.500" cy="-3" r="1.300" fill="#4fa67c"/><circle cx="9.500" cy="-3" r="1.300" fill="#4fa67c"/></g>`};
const drop=(x,y)=>{const[p,q]=pt('B',x,y);return `<g transform="translate(${f(p)} ${f(q)})"><path filter="url(#sh)" d="M-12 -20H12Q20 -20 20 -12V12Q20 20 12 20H6L0 27L-6 20H-12Q-20 20 -20 12V-12Q-20 -20 -12 -20Z" fill="#fafcff" stroke="#2067f6" stroke-width="2"/><circle r="6" fill="#2067f6"/></g>`};
const mapSvg=`<svg class="map" viewBox="0 0 885 1504" preserveAspectRatio="xMinYMin slice" role="img" aria-label="Map">
<defs><filter id="sh" x="-50%" y="-50%" width="200%" height="200%"><feDropShadow dx="0" dy="2" stdDeviation="2" flood-opacity=".3"/></filter></defs>
<rect width="885" height="1504" fill="#f7f7f7"/>${polys(sand,'#f6efe2')}${polys(pink,'#fae7e5')}
<path d="${minor}" fill="none" stroke="#d8dfe7" stroke-width="2"/>
${polys(parks.slice(0,28),'#cbeed8')}${polys(water,'#9fd9eb')}${polys(islands,'#f7f7f7')}${polys(parks.slice(28),'#cbeed8')}${polys([['B','855,858 928,858 950,975 925,990 870,985 850,940']],'#f7f7f7')}${polys([['B','110,1330 150,1320 140,1390 95,1400']],'#fae7e5')}${polys([['B','700,1255 722,1350 715,1410 650,1440 600,1430 650,1400 700,1380'],['B','650,1500 700,1475 755,1405 722,1490 700,1560 645,1560']],'#f6efe2')}${polys(lakes,'#9fd9eb')}
<path d="${path('A','222,36 180,300 155,420 100,680 22,970')}" fill="none" stroke="#4c6a78" stroke-width="1.500" stroke-dasharray="5 4"/>
<g fill="none" stroke-linejoin="round" stroke-linecap="round"><path d="${path('B','600,340 585,450 590,600 640,720 720,800')}" stroke="#9fd9eb" stroke-width="4"/><path d="${path('A','660,1050 690,1110 680,1200 660,1300 690,1400 680,1560')}" stroke="#9fd9eb" stroke-width="2"/><path d="${path('C','1175,20 1110,200 1105,260 1080,260')}" stroke="#9fd9eb" stroke-width="2"/>
<path stroke="#7c8cb8" stroke-width="8" d="${highways.map(h=>path(...h)).join('')}"/><path stroke="#7c8cb8" stroke-width="13" d="${wide.map(h=>path(...h)).join('')}"/>
<path stroke="#adbad6" stroke-width="6" d="${highways.map(h=>path(...h)).join('')}"/><path stroke="#adbad6" stroke-width="11" d="${wide.map(h=>path(...h)).join('')}"/></g>
${labels}
${poi(162,336)}${poi(978,2013)}${drop(843,798)}${drop(880,870)}
<g transform="translate(${pt('B',1092,152).map(f).join(' ')})"><path d="M0 28L-8 18H8Z" fill="#2067f6"/><circle r="20.500" fill="#e4edfe" stroke="#2067f6" stroke-width="3"/><text class="rw" y="6">RW</text></g>
<text class="goog" x="20" y="1488">Google</text></svg>`;

define('dispatch-map',`:host{display:block;position:relative;flex:1 1 0;min-width:0;overflow:hidden;background:#f7f7f7;font-family:Roboto,sans-serif}
.map{position:absolute;inset:0;width:100%;height:100%;display:block}
text{font-family:Roboto,sans-serif;paint-order:stroke;stroke:#fff;stroke-width:5px;stroke-linejoin:round;text-anchor:middle}
.n{font-size:21px;fill:#2c3036;font-weight:500}.g{fill:#54585e}.c{font-size:28px;fill:#202124;font-weight:500}.i{font-style:italic;fill:#2a3137;font-weight:400}
.r{font-size:20px;fill:#2a3a5c}.st{font-size:29px;fill:#4a5056;font-weight:500;font-style:italic}.w{font-size:20px;fill:#2d8294;stroke:none}
.s{text-anchor:start}.e{text-anchor:end}
.rw{font:600 17px Inter,sans-serif;fill:#2067f6;stroke:none}
.goog{font:500 35px "Open Sans",sans-serif;text-anchor:start;fill:#fff;stroke:#8c8f92;stroke-width:4px}
.toggles{position:absolute;left:32px;top:40px;display:flex;flex-direction:column;gap:16px;font:500 25px/32px Inter,sans-serif;color:#1b202b}
.ctl{position:absolute;right:0;width:78px;background:#fff;box-shadow:0 2px 6px rgba(0,0,0,.25);border-radius:4px 0 0 4px;color:#666;display:flex;flex-direction:column;align-items:center}
.ctl button{display:flex;align-items:center;justify-content:center;width:60px;height:80px;--s:34px}
.full{top:20px}.full button{--s:36px}.zoom{top:140px}.zoom button+button{border-top:2px solid #e6e6e6;height:82px}
.drivers{position:absolute;right:6px;top:610px;display:flex;flex-direction:column;gap:16px}
.drivers li{position:relative;width:64px;height:64px;border-radius:50%;background:#cfdefc;color:#1b50c4;font:600 26px/64px Inter,sans-serif;text-align:center}
.drivers i{position:absolute;right:-1px;top:4px;width:15px;height:15px;border-radius:50%;border:2px solid #fff;background:#d93025}
.drivers .ok{background:#8bc34a}
.cam{position:absolute;right:-2px;bottom:48px;width:80px;height:80px;border-radius:50%;background:#fff;box-shadow:0 2px 6px rgba(0,0,0,.25);display:flex;align-items:center;justify-content:center;color:#666;--s:46px}
.legal{position:absolute;left:192px;bottom:0;height:28px;padding-left:16px;display:flex;gap:25px;align-items:center;font-size:20px;color:#000;background:rgba(245,245,245,.75);white-space:nowrap}`,
`${mapSvg}
<div class="toggles"><ui-switch>Unassigned orders</ui-switch><ui-switch>Show all online drivers</ui-switch></div>
<div class="ctl full"><button aria-label="Full screen"><ui-icon name="full"></ui-icon></button></div>
<div class="ctl zoom"><button aria-label="Zoom in"><ui-icon name="zin"></ui-icon></button><button aria-label="Zoom out"><ui-icon name="zout"></ui-icon></button></div>
<ul class="drivers">${['DP','A','JS','PJ','RW','TH'].map((n,i)=>`<li>${n}<i${i>3?' class="ok"':''}></i></li>`).join('')}</ul>
<button class="cam" aria-label="Map camera controls"><ui-icon name="cam"></ui-icon></button>
<div class="legal"><button>Keyboard shortcuts</button><span>Map data ©2025 Google</span><a href="#">Terms</a><a href="#">Report a map error</a></div>`);

/* ---------- shell ---------- */
define('dispatch-app',`:host{display:flex;box-sizing:border-box;height:100vh;border-top:2px solid #e2e2e2;overflow:hidden}
main{flex:1;min-width:0;display:flex;flex-direction:column}
.cols{flex:1;min-height:0;display:flex}
section{display:flex;flex-direction:column;flex:0 0 907px;border-right:2px solid #dfe2e8}
section+section{flex-basis:906px}`,
`<app-sidebar></app-sidebar><main><app-header></app-header><div class="cols">
<section><ui-tabs items="Suggested routes:1,Unassigned orders:2"></ui-tabs><route-suggestion></route-suggestion></section>
<section><ui-tabs items="Planning:0,Active:1,Completed:3"></ui-tabs><planning-empty></planning-empty></section>
<dispatch-map></dispatch-map></div></main>`);
</script>
</body>
</html>
